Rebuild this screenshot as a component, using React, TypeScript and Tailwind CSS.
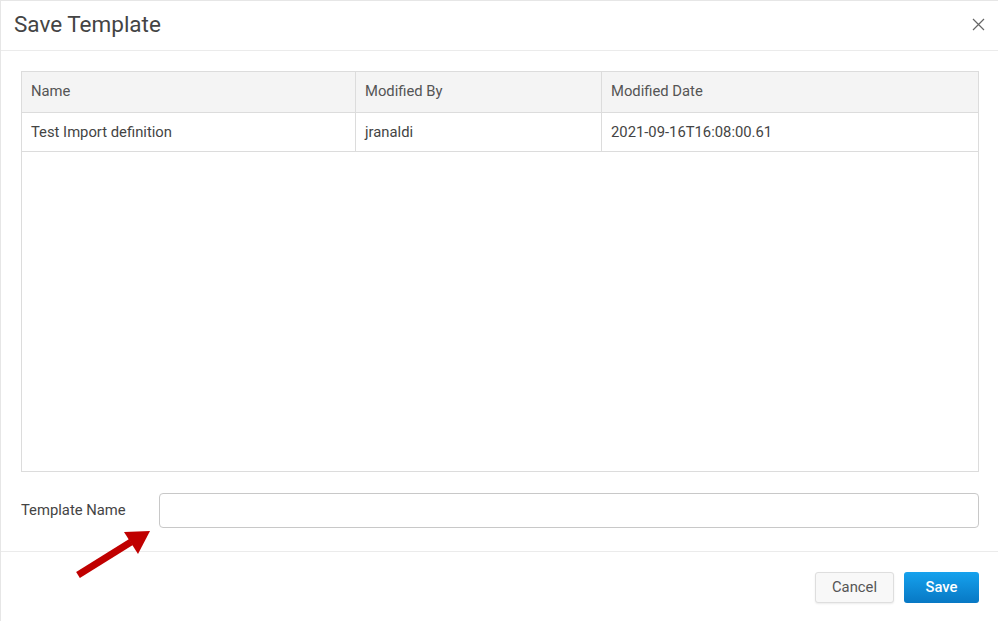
import React from 'react';

const rows = [
  { name: 'Test Import definition', by: 'jranaldi', date: '2021-09-16T16:08:00.61' },
];

export default function App() {
  return (
    <div
      className="relative w-[998px] h-[621px] bg-white border-l border-t border-[#e6e6e6] flex flex-col text-[#333]"
      style={{ fontFamily: 'Roboto, "Liberation Sans", sans-serif' }}
    >
      <div className="h-[50px] shrink-0 flex items-center justify-between pl-[13px] pr-[10px] pb-[2px] border-b border-[#ebebeb]">
        <h1 className="text-[22.5px] text-[#444] font-normal leading-none">Save Template</h1>
        <button className="w-5 h-5 flex items-center justify-center text-[#666]">
          <svg width="13" height="13" viewBox="0 0 13 13" stroke="currentColor" strokeWidth="1.2">
            <path d="M1 1 L12 12 M12 1 L1 12" />
          </svg>
        </button>
      </div>

      <div className="flex-1 pl-[20px] pr-[19px] pt-[20px] flex flex-col">
        <div className="h-[401px] border border-[#dcdcdc] text-[14.8px]">
          <div className="grid grid-cols-[334px_246px_1fr] h-[41px] bg-[#f4f4f4] border-b border-[#dcdcdc] text-[#555]">
            <div className="flex items-center px-[9px] pb-[2px] border-r border-[#dcdcdc]">Name</div>
            <div className="flex items-center px-[9px] pb-[2px] border-r border-[#dcdcdc]">Modified By</div>
            <div className="flex items-center px-[9px] pb-[2px]">Modified Date</div>
          </div>
          {rows.map((r) => (
            <div key={r.name} className="grid grid-cols-[334px_246px_1fr] h-[39px] border-b border-[#dcdcdc] text-[#444]">
              <div className="flex items-center px-[9px] border-r border-[#dcdcdc]">{r.name}</div>
              <div className="flex items-center px-[9px] border-r border-[#dcdcdc]">{r.by}</div>
              <div className="flex items-center px-[9px]">{r.date}</div>
            </div>
          ))}
        </div>

        <div className="flex items-center mt-[21px] h-[35px]">
          <label className="w-[138px] text-[14.8px] text-[#444]">Template Name</label>
          <input className="flex-1 h-[35px] border border-[#c8c8c8] rounded-[4px] px-2 outline-none" />
        </div>
      </div>

      <div className="h-[70px] shrink-0 border-t border-[#ebebeb] flex items-center justify-end gap-[10px] pr-[19px] pt-[1px]">
        <button className="w-[79px] h-[31px] rounded-[3px] border border-[#dedede] bg-[#f8f8f8] text-[14.8px] text-[#555] shadow-[0_1px_2px_rgba(0,0,0,0.08)]">
          Cancel
        </button>
        <button className="w-[75px] h-[31px] rounded-[3px] bg-gradient-to-b from-[#16a2ee] to-[#0878c4] text-white text-[14.8px] font-medium">
          Save
        </button>
      </div>

      <svg className="absolute left-[70px] top-[525px]" width="85" height="55" viewBox="0 0 85 55">
        <path d="M7 49 L60 16" stroke="#c00000" strokeWidth="7" />
        <polygon points="79,5 53,6 67,28" fill="#c00000" />
      </svg>
    </div>
  );
}
